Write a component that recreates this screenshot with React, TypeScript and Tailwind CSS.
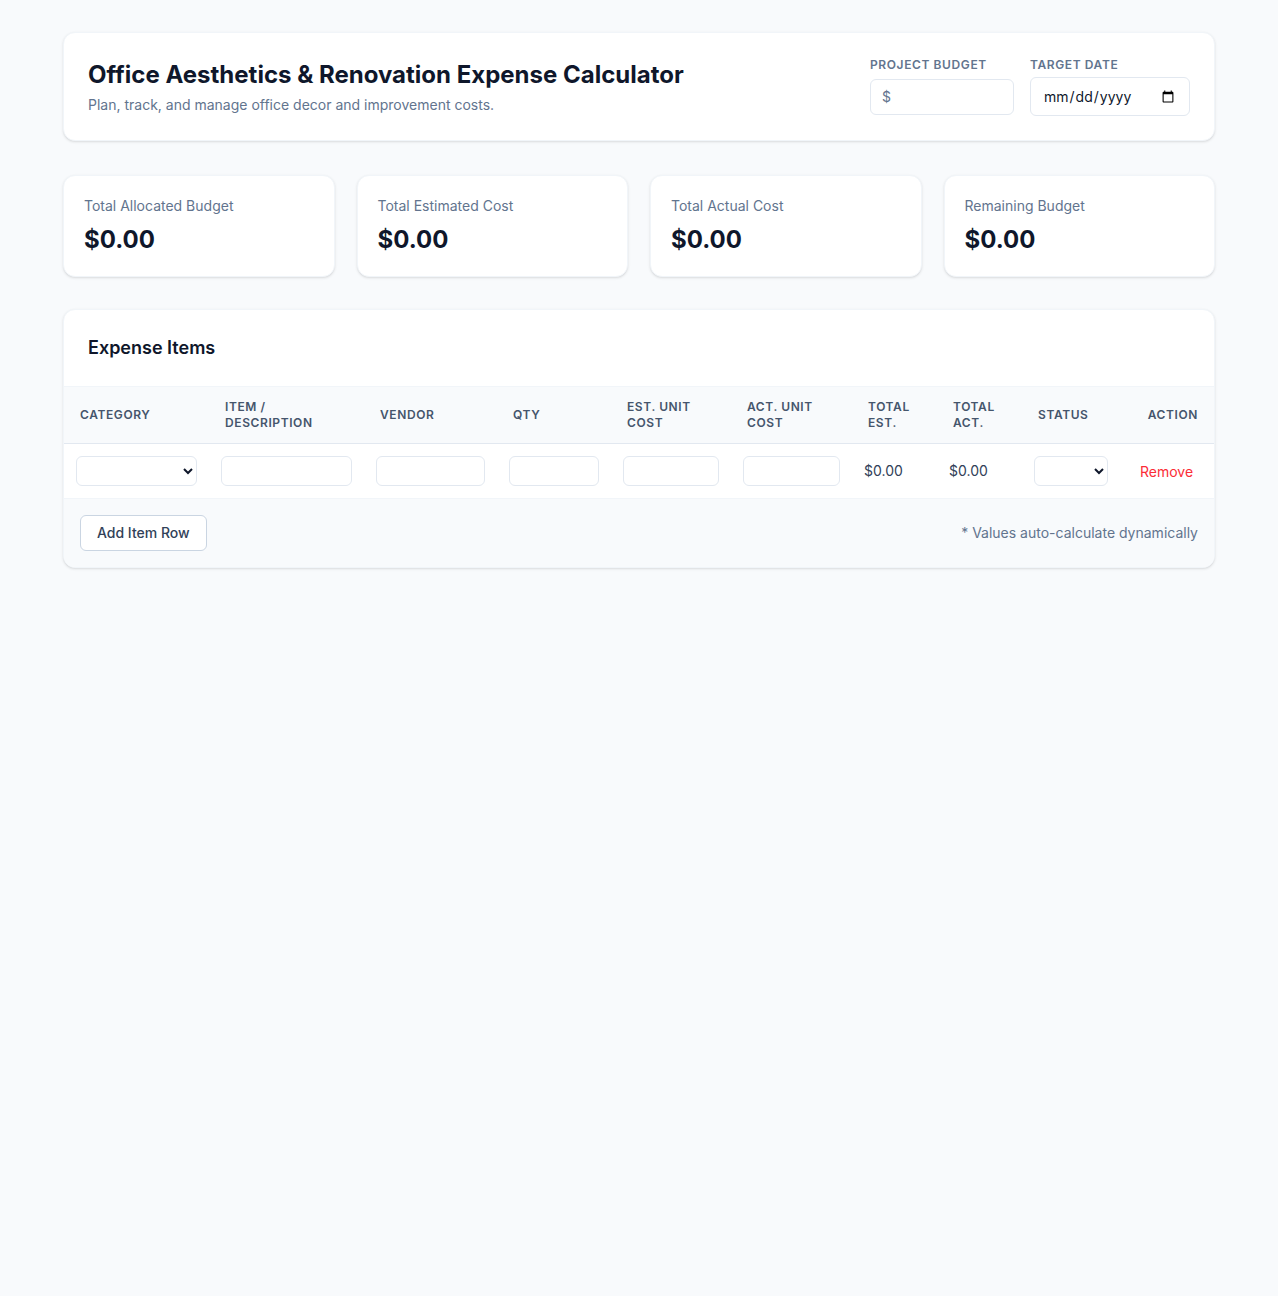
import React from 'react';

const stats = [
  'Total Allocated Budget',
  'Total Estimated Cost',
  'Total Actual Cost',
  'Remaining Budget',
];

const inputCls =
  'w-full h-[30px] px-2 text-sm bg-white border border-slate-200 rounded-md focus:outline-none';

const App: React.FC = () => {
  return (
    <div className="min-h-[1296px] bg-slate-50 font-['Inter',sans-serif] text-slate-900">
      <div className="max-w-6xl mx-auto pt-8 pb-8">
        {/* header */}
        <div className="bg-white rounded-xl border border-slate-100 shadow-sm px-6 py-6 flex items-center justify-between mb-[34px]">
          <div>
            <h1 className="text-2xl font-bold text-slate-900">
              Office Aesthetics &amp; Renovation Expense Calculator
            </h1>
            <p className="mt-1 text-sm text-slate-500">
              Plan, track, and manage office decor and improvement costs.
            </p>
          </div>
          <div className="flex gap-4">
            <div className="flex flex-col">
              <label className="text-xs font-semibold uppercase tracking-wider text-slate-500 mb-1.5">
                Project Budget
              </label>
              <div className="relative">
                <span className="absolute left-3 top-1/2 -translate-y-1/2 text-sm text-slate-500">$</span>
                <input
                  type="number"
                  className="w-[144px] h-9 pl-7 pr-3 text-sm bg-white border border-slate-200 rounded-md focus:outline-none"
                />
              </div>
            </div>
            <div className="flex flex-col">
              <label className="text-xs font-semibold uppercase tracking-wider text-slate-500 mb-1">
                Target Date
              </label>
              <input
                type="date"
                className="w-[160px] h-[39px] px-3 text-sm bg-white border border-slate-200 rounded-md focus:outline-none"
              />
            </div>
          </div>
        </div>

        {/* stats */}
        <div className="grid grid-cols-4 gap-[22px] mb-8">
          {stats.map((s) => (
            <div key={s} className="bg-white rounded-xl border border-slate-100 shadow-sm p-5">
              <div className="text-sm text-slate-500">{s}</div>
              <div className="mt-2 text-2xl font-bold text-slate-900">$0.00</div>
            </div>
          ))}
        </div>

        {/* expense table */}
        <div className="bg-white rounded-xl border border-slate-100 shadow-sm overflow-hidden">
          <div className="px-6 py-6 border-b border-slate-100">
            <h2 className="text-lg font-semibold text-slate-900">Expense Items</h2>
          </div>
          <table className="w-full table-fixed border-collapse">
            <thead className="bg-slate-50">
              <tr className="border-b border-slate-200 text-left text-xs font-semibold uppercase tracking-wider text-slate-600">
                <th className="w-[145px] px-4 py-3 font-semibold">Category</th>
                <th className="w-[155px] px-4 py-3 font-semibold">Item / Description</th>
                <th className="w-[133px] px-4 py-3 font-semibold">Vendor</th>
                <th className="w-[114px] px-4 py-3 font-semibold">Qty</th>
                <th className="w-[120px] px-4 py-3 font-semibold">Est. Unit Cost</th>
                <th className="w-[121px] px-4 py-3 font-semibold">Act. Unit Cost</th>
                <th className="w-[85px] px-4 py-3 font-semibold">Total Est.</th>
                <th className="w-[85px] px-4 py-3 font-semibold">Total Act.</th>
                <th className="w-[109px] px-4 py-3 font-semibold">Status</th>
                <th className="px-4 py-3 font-semibold text-right">Action</th>
              </tr>
            </thead>
            <tbody>
              <tr className="border-b border-slate-100">
                <td className="px-3 py-3">
                  <select className={inputCls}></select>
                </td>
                <td className="px-3 py-3">
                  <input type="text" className={inputCls} />
                </td>
                <td className="px-3 py-3">
                  <input type="text" className={inputCls} />
                </td>
                <td className="px-3 py-3">
                  <input type="number" className={inputCls} />
                </td>
                <td className="px-3 py-3">
                  <input type="number" className={inputCls} />
                </td>
                <td className="px-3 py-3">
                  <input type="number" className={inputCls} />
                </td>
                <td className="px-3 py-3 text-sm text-slate-700">$0.00</td>
                <td className="px-3 py-3 text-sm text-slate-700">$0.00</td>
                <td className="px-3 py-3">
                  <select className="w-[74px] h-[30px] px-2 text-sm bg-white border border-slate-200 rounded-md focus:outline-none"></select>
                </td>
                <td className="pl-[9px] pr-0 py-3 text-left">
                  <button className="text-sm text-red-500">Remove</button>
                </td>
              </tr>
            </tbody>
          </table>
          <div className="bg-slate-50 px-4 py-4 flex items-center justify-between">
            <button className="h-9 px-4 text-sm font-medium text-slate-700 bg-white border border-slate-300 rounded-md">
              Add Item Row
            </button>
            <span className="text-sm text-slate-500">* Values auto-calculate dynamically</span>
          </div>
        </div>
      </div>
    </div>
  );
};

export default App;
